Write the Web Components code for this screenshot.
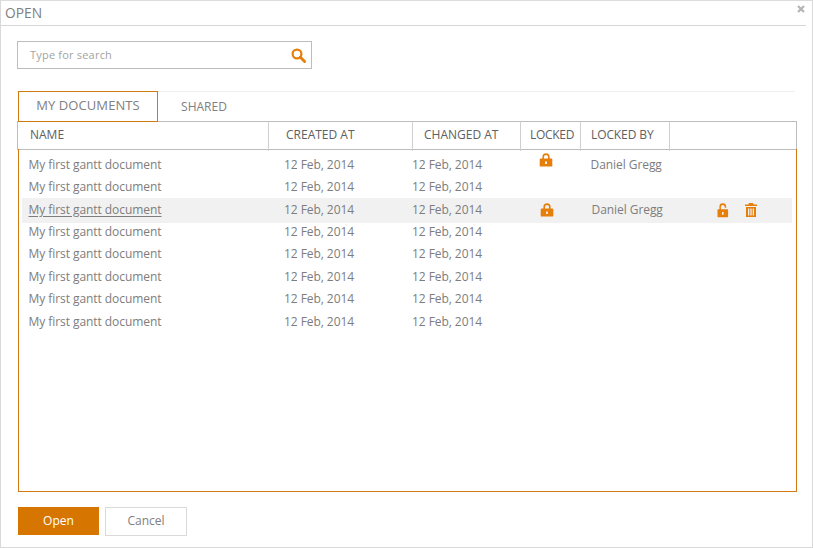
<!DOCTYPE html>
<html><head><meta charset="utf-8">
<style>
html,body{margin:0;padding:0;background:#fff}
body{font-family:"Open Sans","Noto Sans",sans-serif;color:#777}
</style></head>
<body>
<open-dialog>
  <search-box slot="search" placeholder="Type for search"></search-box>
  <tab-strip slot="tabs"></tab-strip>
  <doc-table slot="table"></doc-table>
  <action-button slot="actions" primary>Open</action-button>
  <action-button slot="actions">Cancel</action-button>
</open-dialog>
<script>
const ICONS={
 lock:'<svg width="14" height="16" viewBox="0 0 14 16"><path fill="#e67e0a" d="M3.4 7V4.900a3.600 3.600 0 0 1 7.200 0V7H9V5A2 2 0 0 0 5 5v2z"/><path fill="#e67e0a" fill-rule="evenodd" d="M1.600 6.600h10.800q.9 0 .9.9v6.200q0 .9-.9.9H1.600q-.9 0-.9-.9V7.500q0-.9.9-.9zM6.100 9.500v2.500h1.800V9.500z"/></svg>',
 unlock:'<svg width="12" height="15" viewBox="0 0 12 15"><path fill="#e67e0a" d="M2.400 7V3.700a3.400 3.400 0 0 1 6.800 0v1.100H7.700V3.800a1.900 1.900 0 0 0-3.800 0V7z"/><path fill="#e67e0a" fill-rule="evenodd" d="M1.300 6.200h9q.8 0 .8.800v6.500q0 .8-.8.800h-9q-.8 0-.8-.8V7q0-.8.800-.8zM5 9v2.700h1.600V9z"/></svg>',
 trash:'<svg width="12" height="14" viewBox="0 0 12 14"><path fill="#e67e0a" fill-rule="evenodd" d="M4 0h4l.6 1.500H12V3H0V1.500h3.400zM1 4h10v10H1zM3 5.500V12.500h1.300V5.500zM5.350 5.500V12.500h1.300V5.500zM7.700 5.500V12.500H9V5.500z"/></svg>',
 search:'<svg width="15" height="15" viewBox="0 0 15 15"><circle cx="6" cy="6" r="4.400" fill="none" stroke="#e67e0a" stroke-width="2.200"/><path d="M9.300 9.300L13.600 13.600" stroke="#e67e0a" stroke-width="2.800" stroke-linecap="round"/></svg>',
 close:'<svg width="8" height="8" viewBox="0 0 8 8"><path d="M1 1L7 7M7 1L1 7" stroke="#b4b4b4" stroke-width="2.200"/></svg>'
};
function def(name,html,init){
  customElements.define(name,class extends HTMLElement{
    connectedCallback(){
      if(this.shadowRoot)return;
      const r=this.attachShadow({mode:'open'});
      r.innerHTML=typeof html==='function'?html(this):html;
      if(init)init(this,r);
    }
  });
}
def('icon-glyph',h=>`<style>:host{display:inline-flex;line-height:0}</style>${ICONS[h.getAttribute('name')]}`);

def('open-dialog',`<style>
:host{display:flex;flex-direction:column;box-sizing:border-box;width:813px;height:548px;border:1px solid #d9d9d9;border-top-color:#dcdcdc;position:relative;background:#fff}
header{box-sizing:border-box;height:25px;margin-right:6px;border-bottom:1px solid #d6d6d6;padding-left:4px;font-size:13.800px;line-height:24px;color:#808080}
.x{position:absolute;top:4px;right:7px;display:flex}
.search{padding:15px 0 0 16px}
.tabs{margin-top:22px;padding-left:16px;padding-right:17px}
.table{padding:0 15px 0 16px}
.actions{display:flex;gap:6px;padding:15px 0 0 17px;align-items:flex-start}
</style>
<header>OPEN</header><span class="x"><icon-glyph name="close"></icon-glyph></span>
<div class="search"><slot name="search"></slot></div>
<div class="tabs"><slot name="tabs"></slot></div>
<div class="table"><slot name="table"></slot></div>
<div class="actions"><slot name="actions"></slot></div>`);

def('search-box',h=>`<style>
:host{display:flex;box-sizing:border-box;width:295px;height:28px;border:1px solid #bdbdbd;align-items:center;justify-content:space-between;padding:0 5px 0 12px}
span{font-size:11px;color:#a3a3a3;letter-spacing:.2px;margin-top:-2px}
icon-glyph{margin-top:1px}
</style><span>${h.getAttribute('placeholder')}</span><icon-glyph name="search"></icon-glyph>`);

def('tab-strip',`<style>
:host{display:flex;height:30px;border-top:1px solid #efefef;position:relative;z-index:1;font-size:12px;margin-bottom:-1px}
.t{box-sizing:border-box;height:31px;line-height:28px;text-align:center}
.a{width:140px;margin:-1px 0 0 1px;border:1px solid #d07a12;background:#fff;color:#808080;line-height:26px;font-size:13px;letter-spacing:.08px}
.b{width:92px;line-height:29px;color:#808080}
</style><div class="t a">MY DOCUMENTS</div><div class="t b">SHARED</div>`);

const COLS='251px 144px 108px 60px 89px 1fr';
def('doc-table',`<style>
:host{display:block;width:780px;box-sizing:border-box}
.head{display:grid;grid-template-columns:${COLS};box-sizing:border-box;height:29px;border:1px solid #bdbdbd;font-size:12px;color:#606060}
.head div{box-sizing:border-box;line-height:25px;border-right:1px solid #cfcfcf;margin:-1px 0 -2px;height:30px;padding-top:1px}
.head div:last-child{border-right:0}
.body{box-sizing:border-box;height:343px;margin:-1px 0 0 1px;border:1px solid #d07a12;border-top:0;padding:5px 4px 0 3px;display:flex;flex-direction:column}
.n{padding-left:12px}.c{padding-left:17px}.u{padding-left:11px}.l{padding-left:9px;letter-spacing:-.3px}.b{padding-left:10px;letter-spacing:-.1px}
</style>
<div class="head"><div class="n">NAME</div><div class="c">CREATED AT</div><div class="u">CHANGED AT</div><div class="l">LOCKED</div><div class="b">LOCKED BY</div><div></div></div>
<div class="body" id="b"></div>`,(h,r)=>{
  const b=r.getElementById('b');
  for(let i=0;i<8;i++){
    const e=document.createElement('doc-row');
    if(i===0){e.setAttribute('locked','');}
    if(i===2){e.setAttribute('locked','');e.setAttribute('active','');}
    b.appendChild(e);
  }
});

def('doc-row',h=>{
 const locked=h.hasAttribute('locked'),active=h.hasAttribute('active');
 return `<style>
:host{display:grid;grid-template-columns:262px 128px 109px 62px 118px 1fr;height:25px;margin:-1.300px 0;align-items:start;font-size:12px;letter-spacing:-.06px;color:#7d7d7d;line-height:23px;white-space:nowrap}
:host([active]){background:#f1f1f1}
.n{padding-left:6.500px}
.lk{padding-left:${active?'19px':'18px'};display:flex;align-items:center;height:25px;${active?'':'margin-top:-5px;'}}
.by{padding-left:${active?'8.500px':'7.500px'}}
.act{display:flex;gap:16px;align-items:center;padding-left:16px;height:25px}
u{text-underline-offset:2px}
</style>
<div class="n">${active?'<u>My first gantt document</u>':'My first gantt document'}</div>
<div>12 Feb, 2014</div><div>12 Feb, 2014</div>
<div class="lk">${locked?'<icon-glyph name="lock"></icon-glyph>':''}</div>
<div class="by">${locked?'Daniel Gregg':''}</div>
<div class="act">${active?'<icon-glyph name="unlock"></icon-glyph><icon-glyph name="trash"></icon-glyph>':''}</div>`});

def('action-button',h=>`<style>
:host{display:block;box-sizing:border-box;width:${h.hasAttribute('primary')?'81px':'82px'};height:${h.hasAttribute('primary')?'28px':'29px'};text-align:center;font-size:12px;line-height:26px;
${h.hasAttribute('primary')?'background:#d67600;color:#fff;line-height:28px;':'border:1px solid #d9d9d9;color:#808080;background:#fff;'}}
</style><slot></slot>`);
</script>
</body></html>
